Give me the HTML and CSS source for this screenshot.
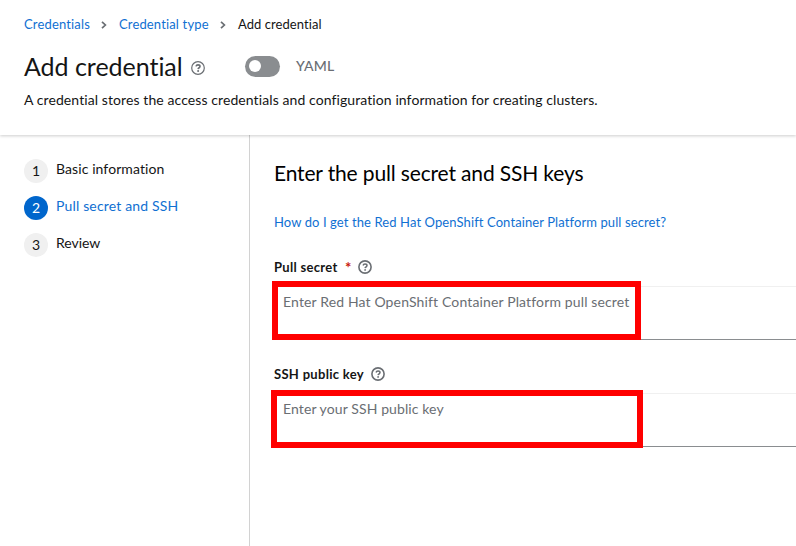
FILE: index.html
```html
<!DOCTYPE html>
<html lang="en">
<head>
<meta charset="utf-8">
<title>Add credential</title>
<link rel="stylesheet" href="styles.css">
</head>
<body>
<svg class="symbols" aria-hidden="true">
  <symbol id="help" viewBox="0 0 14 14">
    <circle cx="7" cy="7" r="6.1" fill="none" stroke="currentColor" stroke-width="1.6"/>
    <path d="M5.1 5.500C5.300 4.400 6 4 7 4c1.200 0 2 .6 2 1.600C9 6.800 7.300 6.700 7.100 8.100" fill="none" stroke="currentColor" stroke-width="1.500"/>
    <circle cx="7.100" cy="9.900" r=".9" fill="currentColor"/>
  </symbol>
  <symbol id="help-outline" viewBox="0 0 14 14">
    <circle cx="7" cy="7" r="6.300" fill="none" stroke="currentColor" stroke-width="1.200"/>
    <path d="M5 5.400C5.300 4.300 6 3.900 7 3.900c1.200 0 2 .7 2 1.600C9 6.800 7.200 6.700 7.100 8.100" fill="none" stroke="currentColor" stroke-width="1.600"/>
    <circle cx="7.100" cy="10" r="1" fill="currentColor"/>
  </symbol>
  <symbol id="chevron" viewBox="0 0 6 8">
    <path d="M1 .8 4.400 4 1 7.200" fill="none" stroke="currentColor" stroke-width="1.700"/>
  </symbol>
</svg>
<header class="page-header">
  <nav class="breadcrumb">
    <a class="crumb crumb-first">Credentials</a>
    <svg class="chevron"><use href="#chevron"/></svg>
    <a class="crumb crumb-type">Credential type</a>
    <svg class="chevron"><use href="#chevron"/></svg>
    <span class="crumb crumb-current">Add credential</span>
  </nav>
  <div class="title-row">
    <h1 class="title">Add credential</h1>
    <svg class="help help-title"><use href="#help-outline"/></svg>
    <span class="switch"><span class="knob"></span></span>
    <span class="switch-label">YAML</span>
  </div>
  <p class="description">A credential stores the access credentials and configuration information for creating clusters.</p>
</header>
<div class="wizard">
  <ol class="steps">
    <li class="step"><span class="number">1</span><span class="step-name name-basic">Basic information</span></li>
    <li class="step current"><span class="number">2</span><span class="step-name name-pull">Pull secret and SSH</span></li>
    <li class="step"><span class="number">3</span><span class="step-name name-review">Review</span></li>
  </ol>
  <main class="content">
    <h2 class="heading">Enter the pull secret and SSH keys</h2>
    <a class="doc-link">How do I get the Red Hat OpenShift Container Platform pull secret?</a>
    <div class="field">
      <div class="label"><span class="label-pull">Pull secret</span><span class="required">*</span><svg class="help help-label"><use href="#help"/></svg></div>
      <div class="textarea"><span class="placeholder ph-pull">Enter Red Hat OpenShift Container Platform pull secret</span><span class="mark mark-pull"></span></div>
    </div>
    <div class="field">
      <div class="label"><span class="label-ssh">SSH public key</span><svg class="help help-label"><use href="#help"/></svg></div>
      <div class="textarea"><span class="placeholder ph-ssh">Enter your SSH public key</span><span class="mark mark-ssh"></span></div>
    </div>
  </main>
</div>
</body>
</html>
```
FILE: styles.css
```css
* { box-sizing: border-box; }
body { margin: 0; width: 796px; height: 546px; overflow: hidden; background: #fff; color: #151515; font: 14px/21px Lato, sans-serif; font-variant-ligatures: none; }
.symbols { position: absolute; width: 0; height: 0; }
h1, h2, p, ol { margin: 0; padding: 0; font-weight: 400; }
a { color: #1070d2; }
li { list-style: none; }
span, a { white-space: nowrap; }
.page-header { position: relative; height: 135px; padding: 14px 24px 0; background: #fff; box-shadow: 0 1px 3px rgba(3, 3, 3, .2); }
.breadcrumb { display: grid; grid-template-columns: 77px 18px 101px 18px auto; align-items: center; height: 21px; font-size: 13px; }
.crumb-first { letter-spacing: .16px; }
.crumb-type { letter-spacing: .15px; }
.crumb-current { letter-spacing: .06px; }
.chevron { width: 6px; height: 8px; color: #6a6e73; }
.title-row { display: grid; grid-template-columns: 167px 54px 51px auto; align-items: center; height: 34px; margin-top: 14px; }
.title { margin-top: -1px; font-size: 25px; line-height: 34px; letter-spacing: -.03px; }
.help { width: 14px; height: 14px; color: #6a6e73; }
.help-title { margin-top: 3px; }
.help-label { margin-top: -1px; }
.switch { display: flex; align-items: center; width: 35px; height: 21px; padding-left: 4px; border-radius: 11px; background: #8a8d90; }
.knob { width: 12px; height: 12px; border-radius: 50%; background: #fff; }
.switch-label { margin-top: -1px; color: #6a6e73; font-weight: 500; letter-spacing: .2px; }
.description { margin-top: 6px; white-space: nowrap; letter-spacing: .09px; }
.wizard { display: grid; grid-template-columns: 250px 1fr; height: 411px; }
.steps { padding: 24px 0 0 24px; border-right: 1px solid #d2d2d2; }
.step { display: flex; gap: 8px; height: 37px; }
.step-name { margin-top: -1px; }
.name-basic { letter-spacing: .09px; }
.name-pull { letter-spacing: .16px; }
.name-review { letter-spacing: -.05px; }
.number { width: 24px; height: 24px; border-radius: 50%; background: #f0f0f0; text-align: center; line-height: 24px; }
.current { color: #1070d2; }
.current .number { color: #fff; background: #06c; }
.content { padding: 23px 0 0 24px; }
.heading { height: 30px; color: #000; font-size: 21px; line-height: 30px; letter-spacing: -.15px; }
.doc-link { display: block; margin: 24px 0 24px; font-size: 13px; letter-spacing: .1px; }
.field { height: 107px; }
.label { display: flex; align-items: center; height: 21px; font-size: 13px; font-weight: 700; }
.label-pull { width: 71px; letter-spacing: .3px; }
.label-ssh { width: 97px; letter-spacing: .3px; }
.required { width: 13px; color: #c9190b; font-size: 15px; }
.textarea { position: relative; height: 54px; margin-top: 8px; padding: 4px 9px; border-top: 1px solid #f0f0f0; border-bottom: 1px solid #8a8d90; }
.placeholder { color: #6a6e73; }
.ph-pull { letter-spacing: .14px; }
.ph-ssh { letter-spacing: .1px; }
.mark { position: absolute; border: 6px solid #f00; }
.mark-pull { left: -2px; top: -6px; width: 369px; height: 59px; }
.mark-ssh { left: -3px; top: -4px; width: 372px; height: 58px; }
```
